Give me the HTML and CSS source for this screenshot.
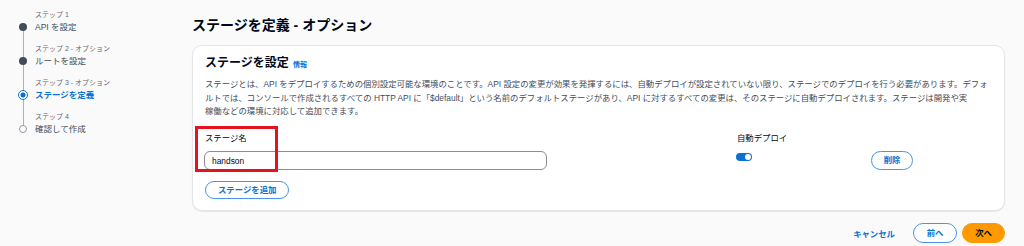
FILE: index.html
```html
<!DOCTYPE html>
<html lang="ja">
<head>
<meta charset="utf-8">
<title>ステージを定義</title>
<link rel="stylesheet" href="styles.css">
</head>
<body>
<div class="page">
  <nav class="sidebar">
    <ol class="steps">
      <li class="step done">
        <span class="step-label">ステップ 1</span>
        <span class="marker"></span>
        <span class="step-name">API を設定</span>
      </li>
      <li class="step done">
        <span class="step-label">ステップ 2 - オプション</span>
        <span class="marker"></span>
        <span class="step-name">ルートを設定</span>
      </li>
      <li class="step current">
        <span class="step-label">ステップ 3 - オプション</span>
        <span class="marker"></span>
        <span class="step-name">ステージを定義</span>
      </li>
      <li class="step todo">
        <span class="step-label">ステップ 4</span>
        <span class="marker"></span>
        <span class="step-name">確認して作成</span>
      </li>
    </ol>
  </nav>
  <main class="main">
    <h1 class="page-title">ステージを定義 - オプション</h1>
    <section class="card">
      <h2 class="card-title">ステージを設定 <a class="info" href="#">情報</a></h2>
      <p class="desc">ステージとは、API をデプロイするための個別設定可能な環境のことです。API 設定の変更が効果を発揮するには、自動デプロイが設定されていない限り、ステージでのデプロイを行う必要があります。デフォルトでは、コンソールで作成されるすべての HTTP API に「$default」という名前のデフォルトステージがあり、API に対するすべての変更は、そのステージに自動デプロイされます。ステージは開発や実<br>稼働などの環境に対応して追加できます。</p>
      <div class="form">
        <label class="field-label" for="stage">ステージ名</label>
        <span class="field-label">自動デプロイ</span>
        <span></span>
        <input class="input" id="stage" type="text" value="handson">
        <span class="toggle"><span class="knob"></span></span>
        <button class="btn">削除</button>
        <span class="highlight"></span>
      </div>
      <button class="btn add">ステージを追加</button>
    </section>
    <div class="footer">
      <a class="cancel" href="#">キャンセル</a>
      <button class="btn prev">前へ</button>
      <button class="btn primary">次へ</button>
    </div>
  </main>
</div>
</body>
</html>
```

FILE: styles.css
```css
* { box-sizing: border-box; }

html, body {
  margin: 0;
  padding: 0;
  background: #fafafa;
  font-family: "Liberation Sans", "Noto Sans CJK JP", sans-serif;
  color: #000716;
}

.page {
  display: flex;
  min-height: 246px;
}

.sidebar {
  width: 192px;
  flex: none;
  padding: 10px 0 0 18px;
}

.steps {
  list-style: none;
  margin: 0;
  padding: 0;
}

.step {
  position: relative;
  display: grid;
  grid-template-columns: 10px 1fr;
  column-gap: 7px;
  padding-bottom: 10px;
}

.step:not(:last-child)::after {
  content: "";
  position: absolute;
  left: 4.5px;
  top: 17px;
  width: 1px;
  height: 34px;
  background: #a8b1bd;
}

.step-label {
  grid-column: 2;
  grid-row: 1;
  font-size: 7px;
  line-height: 10px;
  color: #5f6b7a;
}

.step-name {
  grid-column: 2;
  grid-row: 2;
  font-size: 8.5px;
  line-height: 14px;
  color: #414d5c;
}

.marker {
  grid-column: 1;
  grid-row: 2;
  align-self: center;
  justify-self: center;
  position: relative;
  z-index: 1;
  border-radius: 50%;
}

.done .marker {
  width: 8px;
  height: 8px;
  background: #414d5c;
}

.current .marker {
  width: 10px;
  height: 10px;
  border: 1.5px solid #0972d3;
  background: radial-gradient(circle, #0972d3 0 2.3px, #ffffff 2.8px);
}

.current .step-name {
  color: #0972d3;
  font-weight: 700;
}

.todo .marker {
  width: 8px;
  height: 8px;
  border: 1px solid #8d99a8;
  background: #ffffff;
}

.main {
  flex: 1;
  padding: 16px 19px 0 0;
}

.page-title {
  margin: 0 0 11px;
  font-size: 14px;
  line-height: 18px;
  font-weight: 700;
}

.card {
  background: #ffffff;
  border: 1px solid #e3e5e8;
  border-radius: 10px;
  box-shadow: 0 1px 1px rgba(0, 7, 22, 0.08);
  padding: 9px 13px 11px 12px;
}

.card-title {
  margin: 0;
  font-size: 12px;
  line-height: 16px;
  font-weight: 700;
}

.info {
  font-size: 7px;
  font-weight: 700;
  color: #0972d3;
  text-decoration: none;
  margin-left: 1px;
}

.desc {
  margin: 5px 0 0;
  font-size: 8.4px;
  line-height: 13.5px;
  color: #414d5c;
}

.form {
  position: relative;
  margin-top: 13.5px;
  display: grid;
  grid-template-columns: 532px 134px 42px;
  grid-template-rows: 12px 19px;
  row-gap: 7px;
}

.field-label {
  font-size: 8.4px;
  line-height: 12px;
  color: #000716;
}

.input {
  width: 343px;
  height: 19px;
  margin: 0 0 0 -1px;
  padding: 0 7px;
  border: 1px solid #8c8c94;
  border-radius: 6px;
  font: inherit;
  font-size: 8.4px;
  color: #000716;
  background: #ffffff;
}

.toggle {
  align-self: start;
  margin-top: 2px;
  margin-left: -1px;
  width: 16px;
  height: 8px;
  border-radius: 4px;
  background: #0972d3;
  display: flex;
  justify-content: flex-end;
  align-items: center;
  padding: 1px;
}

.knob {
  width: 6px;
  height: 6px;
  border-radius: 50%;
  background: #ffffff;
}

.highlight {
  position: absolute;
  left: -10px;
  top: -6px;
  width: 83px;
  height: 46px;
  border: 3px solid #e3141d;
}

.btn {
  font-family: inherit;
  font-size: 8.4px;
  font-weight: 700;
  color: #0972d3;
  background: #ffffff;
  border: 1.5px solid #4a94e6;
  border-radius: 12px;
  padding: 0;
  height: 19px;
  line-height: 1;
  cursor: pointer;
}

.add {
  display: block;
  margin-top: 11px;
  height: 18px;
  padding: 0 12px;
}

.footer {
  margin-top: 12px;
  display: flex;
  justify-content: flex-end;
  align-items: center;
}

.cancel {
  font-size: 8.4px;
  font-weight: 700;
  color: #0972d3;
  text-decoration: none;
  margin-right: 18px;
}

.prev {
  width: 44px;
  height: 20px;
  margin-right: 5px;
}

.primary {
  width: 43px;
  height: 20px;
  background: #ff9900;
  border-color: #ff9900;
  color: #000716;
}
```
